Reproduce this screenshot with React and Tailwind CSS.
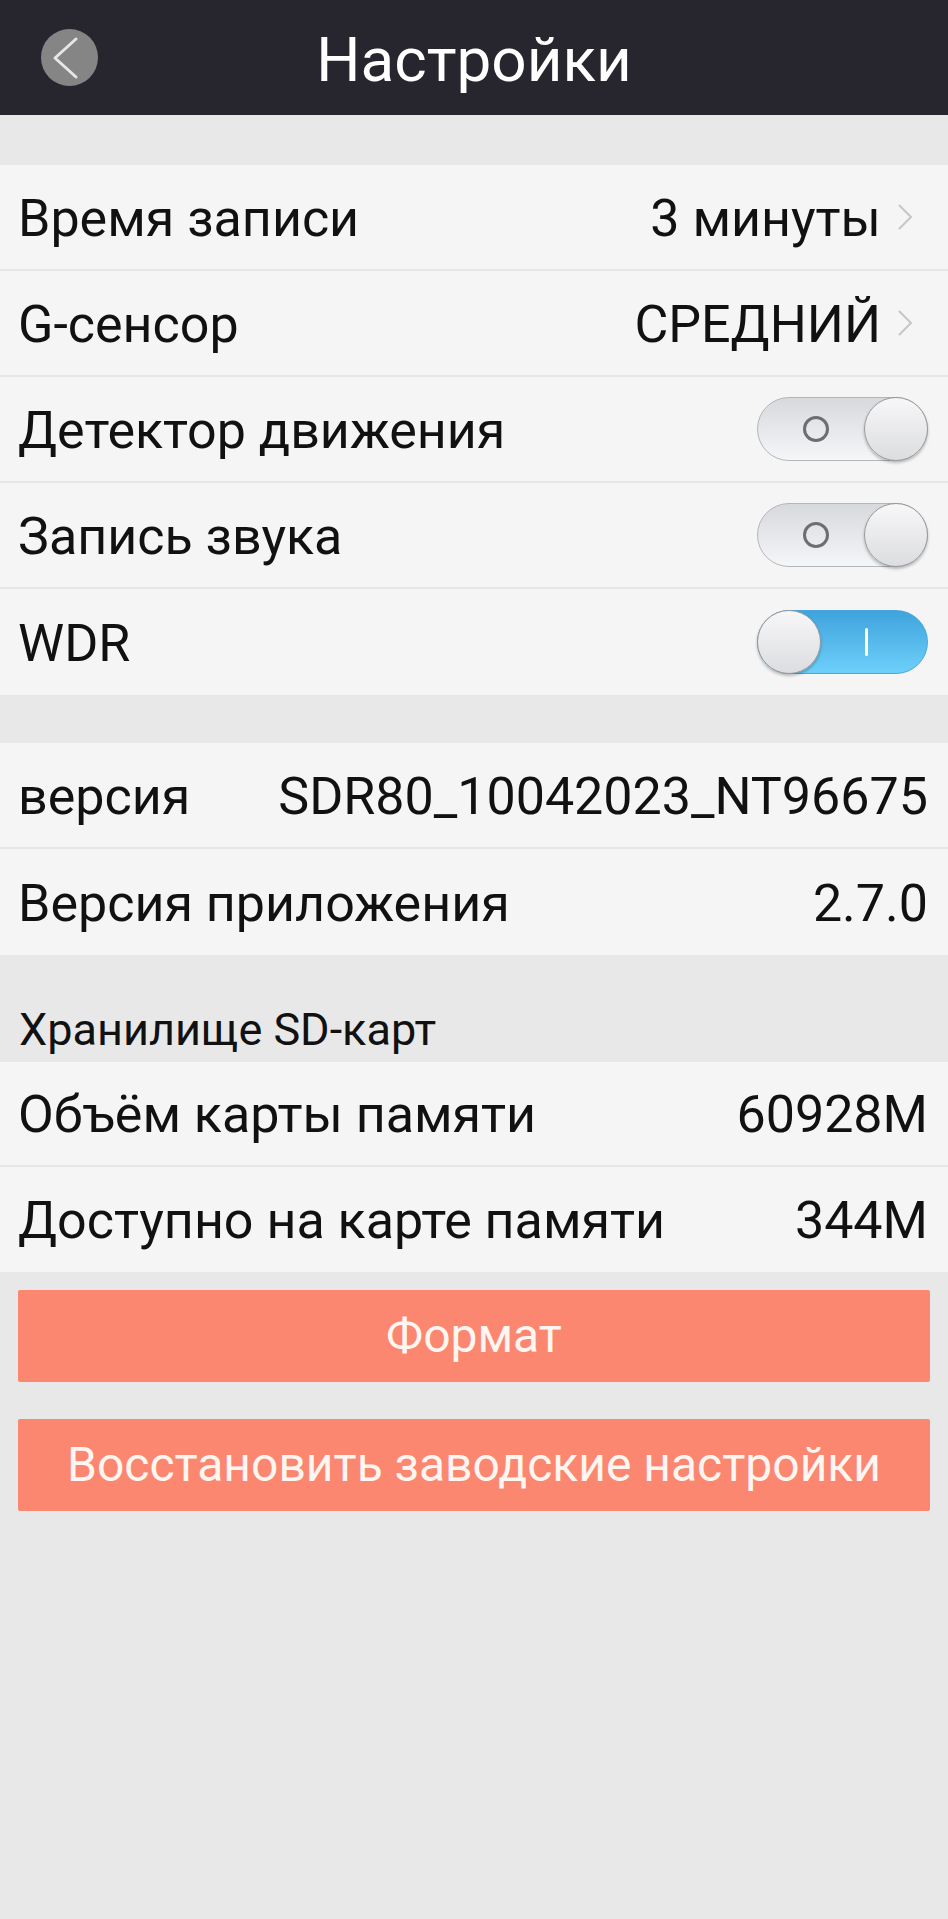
import React, { useState } from "react";

export default function App() {
  const [motion, setMotion] = useState(false);
  const [sound, setSound] = useState(false);
  const [wdr, setWdr] = useState(true);

  return (
    <div className="min-h-screen bg-[#e8e8e8] font-['Roboto','Noto_Sans',sans-serif] text-[#111]">
      {/* HEADER */}
      <div className="h-[115px] bg-[#27262f] grid grid-cols-[1fr_auto_1fr] items-center">
        <div className="pl-[41px]">
          <button className="w-[57px] h-[57px] rounded-full bg-[#858585] flex items-center justify-center">
            <svg width="57" height="57" viewBox="0 0 57 57">
              <path
                d="M35 10 L14 29 L35 48"
                fill="none"
                stroke="#e6e6e6"
                strokeWidth="3"
                strokeLinecap="round"
                strokeLinejoin="round"
              />
            </svg>
          </button>
        </div>
        <h1 className="text-[62px] leading-none text-white pt-[4px]">Настройки</h1>
        <div />
      </div>

      <div className="h-[50px]" />

      {/* RECORD SETTINGS */}
      <div className="bg-[#f5f5f5] divide-y-2 divide-[#e6e6e6]">
        <Row title="Время записи" value="3 минуты" chevron />
        <Row title="G-сенсор" value="СРЕДНИЙ" chevron />
        <Row title="Детектор движения">
          <Toggle on={motion} onClick={() => setMotion(!motion)} />
        </Row>
        <Row title="Запись звука">
          <Toggle on={sound} onClick={() => setSound(!sound)} />
        </Row>
        <Row title="WDR">
          <Toggle on={wdr} onClick={() => setWdr(!wdr)} />
        </Row>
      </div>

      <div className="h-[48px]" />

      {/* VERSIONS */}
      <div className="bg-[#f5f5f5] divide-y-2 divide-[#e6e6e6]">
        <Row title="версия" value="SDR80_10042023_NT96675" />
        <Row title="Версия приложения" value="2.7.0" />
      </div>

      {/* SD CARD */}
      <div className="h-[107px] flex items-end px-[19px] pb-[10px]">
        <span className="text-[45px] leading-none">Хранилище SD-карт</span>
      </div>
      <div className="bg-[#f5f5f5] divide-y-2 divide-[#e6e6e6]">
        <Row title="Объём карты памяти" value="60928M" h="h-[105px]" />
        <Row title="Доступно на карте памяти" value="344M" h="h-[105px]" />
      </div>

      <div className="px-[18px] pt-[18px] flex flex-col gap-[37px]">
        <ActionButton label="Формат" />
        <ActionButton label="Восстановить заводские настройки" />
      </div>
    </div>
  );
}

function Row({ title, value, chevron, children, h = "h-[106px]" }) {
  return (
    <div className={`${h} flex items-center justify-between pl-[18px] ${chevron ? "pr-[35px]" : "pr-[20px]"}`}>
      <span className="text-[52px] leading-none pt-[3px]">{title}</span>
      {children || (
        <div className="flex items-center gap-[16px]">
          <span className="text-[52px] leading-none pt-[3px]">{value}</span>
          {chevron && (
            <svg width="16" height="28" viewBox="0 0 16 28">
              <path d="M2 2 L14 14 L2 26" fill="none" stroke="#c6c6c6" strokeWidth="2" />
            </svg>
          )}
        </div>
      )}
    </div>
  );
}

function Toggle({ on, onClick }) {
  return (
    <button
      onClick={onClick}
      className={`w-[171px] h-[64px] rounded-full flex items-center border ${
        on
          ? "flex-row bg-gradient-to-b from-[#3fa3dd] to-[#6dd0fa] border-[#4aa6dc]"
          : "flex-row-reverse bg-gradient-to-b from-[#d7d9dd] to-[#f5f6f8] border-[#b4b6ba]"
      }`}
    >
      <div className="w-[64px] h-[64px] -m-px shrink-0 rounded-full bg-gradient-to-b from-[#f7f7f8] to-[#dcdde0] border border-[#9a9a9c] shadow-[0_2px_3px_rgba(0,0,0,0.25)]" />
      <div className={`flex-1 flex items-center justify-center ${on ? "pr-[14px]" : "pl-[8px]"}`}>
        {on ? (
          <div className="w-[3px] h-[28px] bg-white rounded-full" />
        ) : (
          <div className="w-[26px] h-[26px] rounded-full border-[3px] border-[#6e6e70]" />
        )}
      </div>
    </button>
  );
}

function ActionButton({ label }) {
  return (
    <button className="h-[92px] w-full bg-[#fc8770] rounded-[2px] text-[#fff6f2] text-[48px] leading-none">
      {label}
    </button>
  );
}
